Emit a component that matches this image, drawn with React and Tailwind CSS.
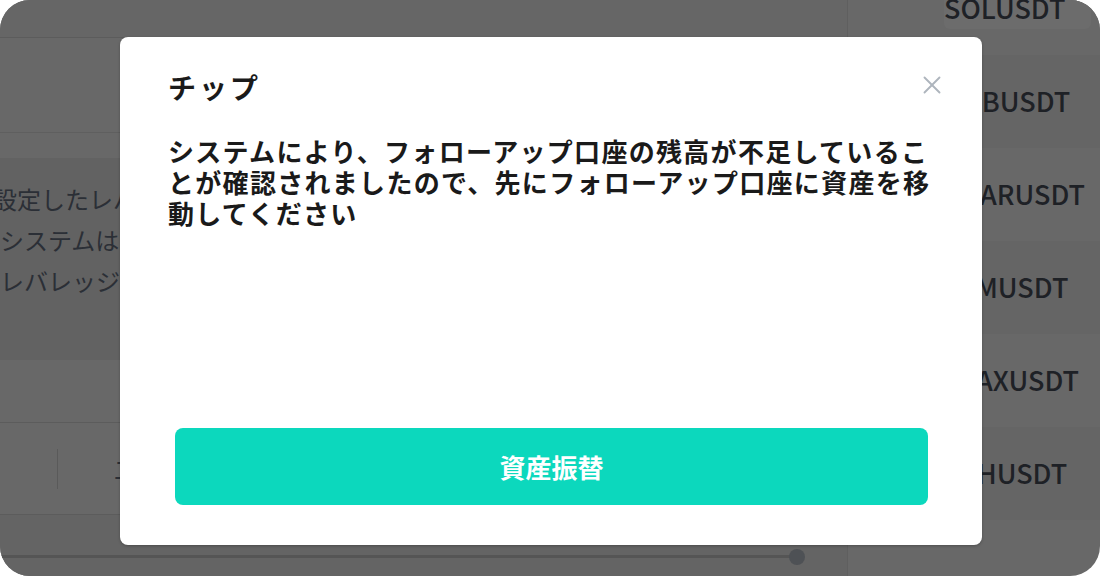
import { X } from 'lucide-react';

const symbols = [
  { name: 'SOLUSDT', chip: true },
  { name: 'BNBUSDT' },
  { name: 'NEARUSDT' },
  { name: 'ATMUSDT' },
  { name: 'AVAXUSDT' },
  { name: 'ETHUSDT' },
];

export default function App() {
  return (
    <div
      className="w-[1100px] h-[576px] bg-white"
      style={{ fontFamily: '"Noto Sans CJK JP", "Noto Sans", sans-serif' }}
    >
      <div className="relative w-full h-full rounded-[30px] overflow-hidden bg-[#686868] flex">
        {/* dimmed page behind */}
        <div className="w-[848px] flex flex-col border-r border-[#5f5f5f]">
          <div className="h-[38px] bg-[#666666] border-b border-[#5c5c5c]"></div>
          <div className="h-[95px] border-b border-[#5f5f5f]"></div>
          <div className="h-[25px]"></div>
          <div className="h-[202px] bg-[#626262] overflow-hidden pt-[20px] text-[24px] leading-[41px] text-[#2b2f36] whitespace-nowrap">
            <div className="-ml-[7px]">設定したレバレッジ倍率が</div>
            <div>システムは自動的に</div>
            <div>レバレッジを調整します</div>
            <div className="-ml-[12px]">。</div>
          </div>
          <div className="h-[63px] border-b border-[#5c5c5c]"></div>
          <div className="h-[92px] flex items-center border-b border-[#5c5c5c]">
            <div className="ml-[57px] w-px h-[40px] bg-[#5a5a5a]"></div>
            <div className="ml-[56px] text-[24px] text-[#2b2f36]">二</div>
          </div>
          <div className="flex-1 bg-[#646464] flex items-center pr-[42px] pt-[22px]">
            <div className="flex-1 h-[3px] bg-[#555555]"></div>
            <div className="w-[16px] h-[16px] rounded-full bg-[#4e5155] -ml-[4px]"></div>
          </div>
        </div>

        <div className="flex-1 flex flex-col">
          {symbols.map((s, i) => (
            <div
              key={s.name}
              className={`h-[93px] flex items-center pl-[96px] text-[27px] font-medium text-[#1e2126] whitespace-nowrap ${
                i % 2 === 0 ? 'bg-[#686868]' : 'bg-[#656565]'
              } ${i === 0 ? '-mt-[38px]' : ''}`}
            >
              {s.chip ? (
                <span className="bg-[#6c6c6c] rounded-[6px] pr-[26px]">{s.name}</span>
              ) : (
                <span>{s.name}</span>
              )}
            </div>
          ))}
        </div>

        {/* modal */}
        <div className="absolute left-[120px] top-[37px] w-[862px] h-[508px] bg-white rounded-[8px] shadow-[0_1px_3px_rgba(0,0,0,0.25)] flex flex-col px-[48px] pt-[30px] pb-[40px]">
          <div className="flex items-start justify-between">
            <h2 className="text-[28px] font-bold text-[#1a1a1a] leading-[40px] tracking-[3px]">チップ</h2>
            <X className="w-[30px] h-[30px] text-[#aeb5bd] mt-[3px] -mr-[13px]" strokeWidth={1.5} />
          </div>
          <p className="mt-[28px] w-[766px] text-[26px] font-semibold text-[#1a1a1a] leading-[31px] tracking-[1.3px]">
            システムにより、フォローアップ口座の残高が不足していることが確認されましたので、先にフォローアップ口座に資産を移動してください
          </p>
          <div className="flex-1"></div>
          <button className="ml-[7px] w-[753px] h-[77px] rounded-[8px] bg-[#0cd8bd] text-white text-[26px] font-bold">
            資産振替
          </button>
        </div>
      </div>
    </div>
  );
}
